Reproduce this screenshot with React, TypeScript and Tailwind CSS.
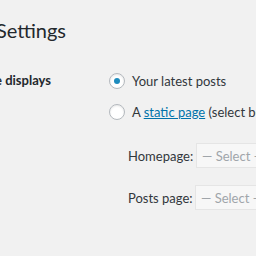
export default function App() {
  const font = { fontFamily: 'Lato, "Noto Sans", sans-serif' };
  return (
    <div className="w-[256px] h-[256px] overflow-hidden bg-[#f1f1f1] text-[#23282d]" style={font}>
      <div className="w-[66px] flex justify-end pt-[17px]">
        <h1 className="text-[20px] leading-[26px] font-normal whitespace-nowrap shrink-0">Reading Settings</h1>
      </div>
      <div className="flex mt-[27px]">
        <div className="w-[51px] shrink-0 flex justify-end">
          <div className="text-[13px] font-bold leading-[20px] whitespace-nowrap shrink-0">Front page displays</div>
        </div>
        <div className="ml-[58px] flex flex-col text-[13px] leading-[20px]">
          <label className="flex items-center gap-[7px] h-[20px] mt-[1px] whitespace-nowrap">
            <span className="w-[16px] h-[16px] shrink-0 rounded-full border border-[#b4b9be] bg-white shadow-[inset_0_1px_2px_rgba(0,0,0,0.1)] flex items-center justify-center">
              <span className="w-[6px] h-[6px] rounded-full bg-[#1e8cbe]" />
            </span>
            <span className="text-[#32373c]">Your latest posts</span>
          </label>
          <label className="flex items-center gap-[7px] h-[20px] mt-[11px] whitespace-nowrap">
            <span className="w-[16px] h-[16px] shrink-0 rounded-full border border-[#b4b9be] bg-white shadow-[inset_0_1px_2px_rgba(0,0,0,0.1)]" />
            <span className="text-[#32373c]">
              A <span className="text-[#0073aa] underline">static page</span> (select below)
            </span>
          </label>
          <div className="ml-[19px] mt-[21px] flex flex-col gap-[17px]">
            <div className="flex items-center whitespace-nowrap">
              <span className="w-[68px] shrink-0 text-[#32373c]">Homepage:</span>
              <div className="h-[25px] w-[120px] shrink-0 bg-[#f7f7f7] border border-[#e5e5e5] flex items-center pl-[5px] text-[#a0a5aa]">— Select —</div>
            </div>
            <div className="flex items-center whitespace-nowrap">
              <span className="w-[67px] shrink-0 text-[#32373c]">Posts page:</span>
              <div className="h-[25px] w-[120px] shrink-0 bg-[#f7f7f7] border border-[#e5e5e5] flex items-center pl-[5px] text-[#a0a5aa]">— Select —</div>
            </div>
          </div>
        </div>
      </div>
    </div>
  );
}
